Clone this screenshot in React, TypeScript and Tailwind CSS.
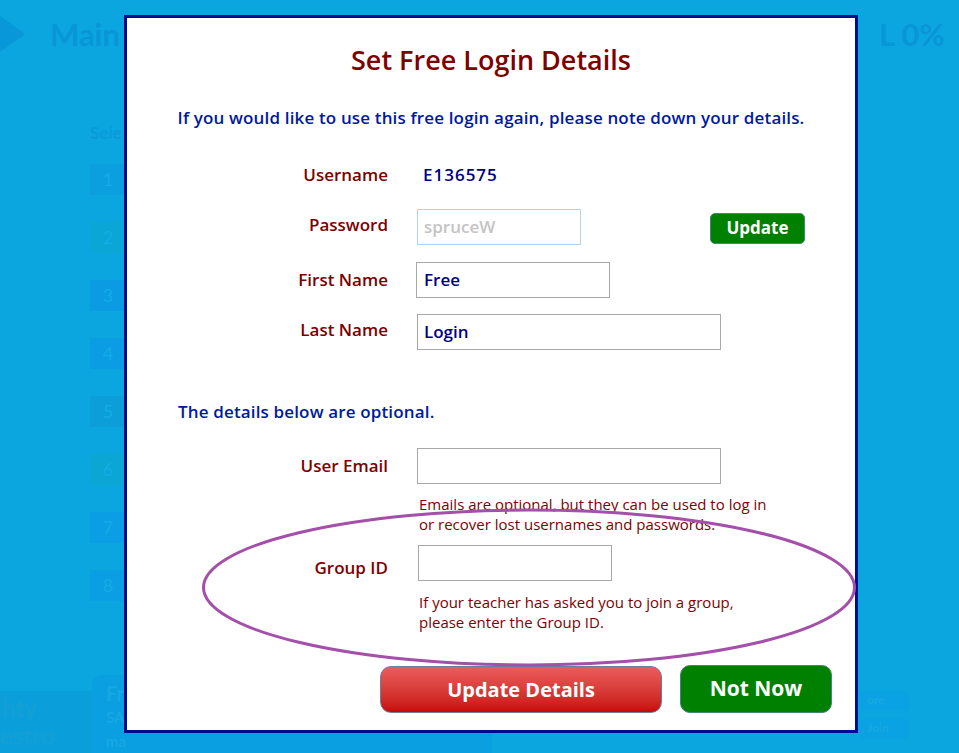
import React from "react";

const Label = ({ children, className = "" }: { children: React.ReactNode; className?: string }) => (
  <div className={`w-[261px] shrink-0 text-right text-[17px] font-semibold text-[#7d0000] ${className}`}>{children}</div>
);

export default function App() {
  const boxes = [
    { n: "1", c: "bg-[#0b9fe0]" },
    { n: "2", c: "bg-[#0aa7d6]" },
    { n: "3", c: "bg-[#0a9be2]" },
    { n: "4", c: "bg-[#0a9de4]" },
    { n: "5", c: "bg-[#0b9ed8]" },
    { n: "6", c: "bg-[#0ba6d4]" },
    { n: "7", c: "bg-[#0a9ee4]" },
    { n: "8", c: "bg-[#0a9fe3]" },
  ];
  return (
    <div className="relative w-[959px] h-[753px] overflow-hidden bg-[#0ba6df] font-['Open_Sans',sans-serif]">
      {/* background page (faded) */}
      <div className="flex flex-col h-full font-['Lato',sans-serif]">
        <div className="flex items-center h-[66px] pt-[2px]">
          <svg width="26" height="40" viewBox="0 0 26 40">
            <polygon points="0,2 25,20 0,38" fill="#0897d8" />
          </svg>
          <div className="ml-[24px] text-[31px] font-bold text-[#0996d6]">Main</div>
          <div className="ml-auto mr-[14px] text-[31px] font-bold text-[#0996d6]">L 0%</div>
        </div>
        <div className="pl-[90px] mt-[54px] text-[17px] font-bold text-[#0a9ad9]">Sele</div>
        <div className="pl-[90px] mt-[18px] flex flex-col gap-[27px]">
          {boxes.map((b) => (
            <div key={b.n} className={`w-[36px] h-[31px] ${b.c} flex items-center justify-center text-[18px] text-[#14ace6]`}>
              {b.n}
            </div>
          ))}
        </div>
        <div className="mt-auto flex items-end h-[78px]">
          <div className="w-[92px] h-[62px] bg-[#0a9fda] flex flex-col justify-center text-[#139fd6] font-bold leading-[28px] text-[24px] overflow-hidden">
            <div className="pl-[2px]">hty</div>
            <div>estro</div>
          </div>
          <div className="w-[400px] h-[78px] rounded-tl-[10px] bg-[#0a9fe0] pl-[14px] pt-[6px] text-[#16a8e4] font-bold leading-[24px]">
            <div className="text-[20px]">Fr</div>
            <div className="text-[15px]">SA</div>
            <div className="text-[15px]">ma</div>
          </div>
          <div className="ml-auto mr-[50px] mb-[14px] flex flex-col gap-[8px]">
            <div className="w-[50px] h-[20px] rounded-[4px] bg-[#0aa2e2] text-[12px] text-[#18a9e4] font-bold pl-[8px]">ore</div>
            <div className="w-[50px] h-[20px] rounded-[4px] bg-[#0aa2e2] text-[12px] text-[#18a9e4] font-bold pl-[8px]">Join</div>
          </div>
        </div>
      </div>

      {/* modal */}
      <div className="absolute left-[124px] top-[15px] w-[734px] h-[718px] bg-white border-[3px] border-[#000c8c] flex flex-col">
        <div className="mt-[24px] h-[36px] leading-[36px] text-center text-[27px] font-semibold text-[#800000]">
          Set Free Login Details
        </div>
        <div className="mt-[28px] h-[24px] leading-[24px] text-center text-[17px] tracking-[0.15px] font-semibold text-[#001a9c]">
          If you would like to use this free login again, please note down your details.
        </div>

        <div className="mt-[27px] h-[36px] flex items-center">
          <Label>Username</Label>
          <div className="ml-[35px] text-[17px] tracking-[1px] font-semibold text-[#000080]">E136575</div>
        </div>

        <div className="mt-[16px] h-[36px] flex items-center">
          <Label className="-mt-[4px]">Password</Label>
          <div className="ml-[29px] w-[164px] h-[36px] border border-[#b4d2f0] flex items-center pl-[6px] text-[17px] font-semibold text-[#c4c4c4]">
            spruceW
          </div>
          <button className="ml-[129px] mt-[2px] w-[95px] h-[31px] rounded-[5px] bg-[#008000] border border-[#3e8a70] text-white text-[17px] font-bold">
            Update
          </button>
        </div>

        <div className="mt-[17px] h-[35px] flex items-center">
          <Label>First Name</Label>
          <div className="ml-[28px] w-[194px] h-[36px] border border-[#a8a8a8] flex items-center pl-[7px] text-[17px] font-semibold text-[#000080]">
            Free
          </div>
        </div>

        <div className="mt-[17px] h-[35px] flex items-center">
          <Label className="-mt-[4px]">Last Name</Label>
          <div className="ml-[29px] w-[304px] h-[36px] border border-[#a8a8a8] flex items-center pl-[6px] text-[17px] font-semibold text-[#000080]">
            Login
          </div>
        </div>

        <div className="mt-[51px] h-[24px] leading-[24px] pl-[51px] text-[17px] tracking-[0.15px] font-semibold text-[#001a9c]">
          The details below are optional.
        </div>

        <div className="mt-[24px] h-[35px] flex items-center">
          <Label>User Email</Label>
          <div className="ml-[29px] w-[304px] h-[36px] border border-[#a8a8a8]" />
        </div>

        <div className="mt-[11px] pl-[292px] text-[15px] leading-[20px] text-[#800000]">
          <div>Emails are optional, but they can be used to log in</div>
          <div>or recover lost usernames and passwords.</div>
        </div>

        <div className="mt-[11px] h-[35px] flex items-start">
          <Label className="mt-[10px]">Group ID</Label>
          <div className="ml-[30px] w-[194px] h-[36px] border border-[#a8a8a8]" />
        </div>

        <div className="mt-[12px] pl-[292px] text-[15px] leading-[20px] text-[#800000]">
          <div>If your teacher has asked you to join a group,</div>
          <div>please enter the Group ID.</div>
        </div>

        <div className="mt-[34px] flex justify-end gap-[18px] pr-[23px]">
          <button className="w-[282px] h-[47px] rounded-[11px] border border-[#6b7f9c] bg-gradient-to-b from-[#ea5c5c] to-[#c70606] text-white text-[20px] font-bold">
            Update Details
          </button>
          <button className="w-[152px] h-[48px] -mt-[1px] rounded-[10px] border border-[#45857a] bg-[#008000] text-white text-[21px] font-bold">
            Not Now
          </button>
        </div>
      </div>

      {/* annotation ellipse */}
      <svg className="absolute left-0 top-0 pointer-events-none" width="959" height="753">
        <ellipse cx="529" cy="587.5" rx="325.5" ry="77.5" fill="none" stroke="#a44fa9" strokeWidth="3" />
      </svg>
    </div>
  );
}
